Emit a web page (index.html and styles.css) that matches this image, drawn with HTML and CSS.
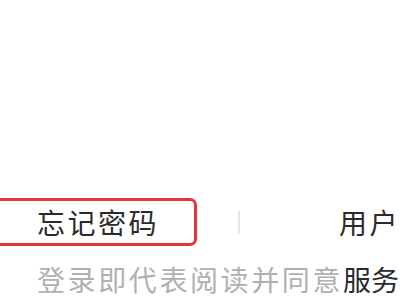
FILE: index.html
```html
<!DOCTYPE html>
<html lang="zh">
  <head>
    <meta charset="UTF-8" />
    <title>登录</title>
    <link rel="stylesheet" href="styles.css">
  </head>
  <body>
    <main class="screen">
      <nav class="links">
        <a class="link forgot">忘记密码</a>
        <span class="sep"></span>
        <a class="link register">用户</a>
      </nav>
      <p class="agree">登录即代表阅读并同意<span class="terms">服务</span></p>
    </main>
  </body>
</html>
```

FILE: styles.css
```css
body {
  margin: 0;
  padding: 0;
  background: #fff;
  overflow: hidden;
}

.screen {
  width: 400px;
  height: 300px;
  overflow: hidden;
  padding-top: 198px;
  box-sizing: border-box;
  font-family: "Noto Sans CJK SC", sans-serif;
  font-size: 28px;
  letter-spacing: 2.5px;
  white-space: nowrap;
}

.links {
  display: flex;
  align-items: center;
  height: 48px;
}

.link {
  color: #2b2b2b;
  line-height: 30px;
}

.forgot {
  margin-left: -6px;
  width: 206px;
  height: 48px;
  box-sizing: border-box;
  border: 3px solid #e8333b;
  border-radius: 7px;
  padding-left: 40px;
  display: flex;
  align-items: center;
}

.sep {
  width: 2px;
  height: 22px;
  background: #e4e4e4;
  margin-left: 41px;
}

.register {
  margin-left: 99px;
}

.agree {
  margin: 18px 0 0 37px;
  line-height: 30px;
  color: #b0b0b0;
  letter-spacing: 2.6px;
}

.terms {
  color: #2b2b2b;
  letter-spacing: 0;
}
```
